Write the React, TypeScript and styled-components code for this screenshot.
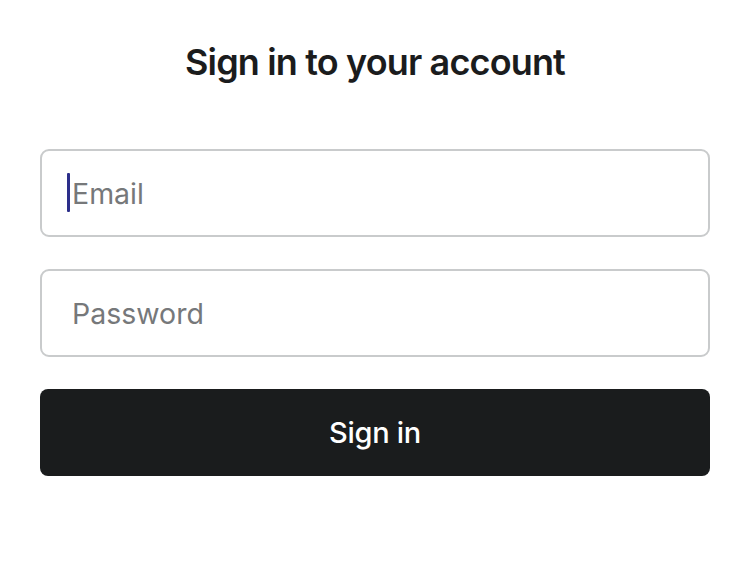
import React from "react";
import styled, { createGlobalStyle } from "styled-components";

const Global = createGlobalStyle`
  html, body { margin: 0; padding: 0; background: #ffffff; }
  body { font-family: Inter, "Noto Sans", sans-serif; -webkit-font-smoothing: antialiased; }
  * { box-sizing: border-box; }
`;

const Page = styled.main`
  width: 750px;
  padding: 36px 40px 0;
  display: flex;
  flex-direction: column;
`;

const Title = styled.h1`
  margin: 0 0 61px;
  text-align: center;
  font-size: 36px;
  line-height: 52px;
  font-weight: 600;
  letter-spacing: -0.85px;
  color: #1b1c1d;
`;

const Form = styled.form`
  display: flex;
  flex-direction: column;
  gap: 32px;
`;

const Field = styled.div<{ $focused?: boolean }>`
  position: relative;
  ${(p) =>
    p.$focused
      ? `&::before {
    content: "";
    position: absolute;
    left: 27px;
    top: 24px;
    width: 3px;
    height: 39px;
    background: #2c2f8a;
    border-radius: 1px;
  }`
      : ""}
`;

const Input = styled.input`
  display: block;
  width: 100%;
  height: 88px;
  border: 2px solid #c9cbcc;
  border-radius: 9px;
  padding: 0 30px;
  font-family: Inter, "Noto Sans", sans-serif;
  font-size: 28.5px;
  color: #1b1c1d;
  background: #fff;
  outline: none;
  caret-color: transparent;
  &::placeholder { color: #76787a; }
`;

const Button = styled.button`
  height: 87px;
  border: none;
  border-radius: 8px;
  background: #1a1c1d;
  color: #ffffff;
  font-family: Inter, "Noto Sans", sans-serif;
  font-size: 29px;
  font-weight: 500;
  letter-spacing: -0.3px;
  cursor: pointer;
`;

export default function App() {
  return (
    <>
      <Global />
      <Page>
        <Title>Sign in to your account</Title>
        <Form onSubmit={(e) => e.preventDefault()}>
          <Field $focused>
            <Input type="email" placeholder="Email" />
          </Field>
          <Field>
            <Input type="password" placeholder="Password" />
          </Field>
          <Button type="submit">Sign in</Button>
        </Form>
      </Page>
    </>
  );
}
